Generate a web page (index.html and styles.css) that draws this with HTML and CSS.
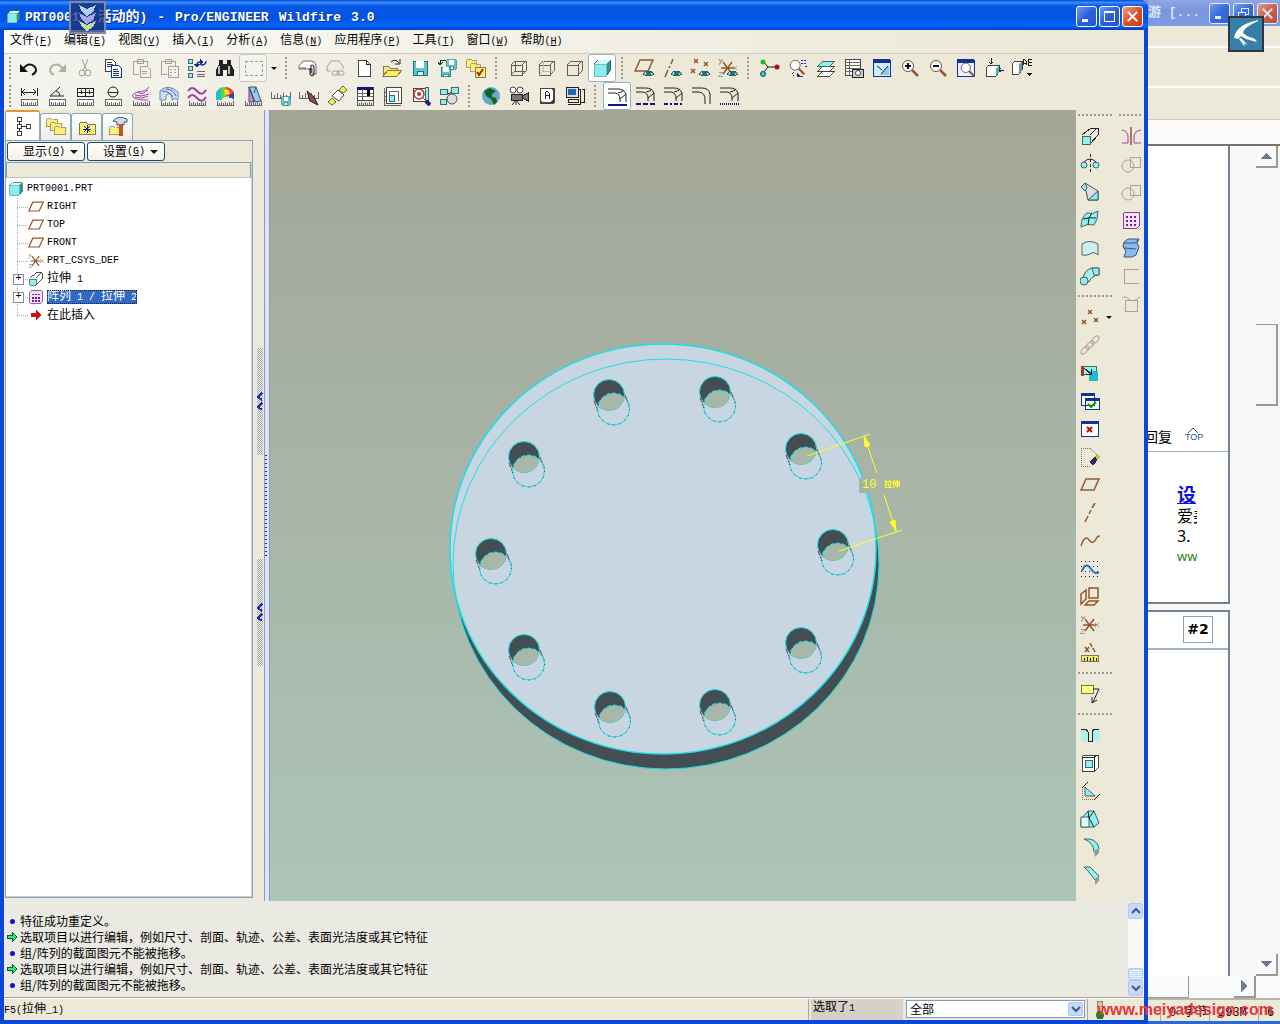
FILE: index.html
```
<!DOCTYPE html>
<html lang="zh-CN">
<head>
  <meta charset="UTF-8">
  <meta name="viewport" content="width=device-width, initial-scale=1.0">
  <title>PRT0001 (活动的) - Pro/ENGINEER Wildfire 3.0</title>
  <link rel="stylesheet" href="styles.css">
</head>
<body>

<!-- shared icon parts -->
<svg class="defs" aria-hidden="true">
  <symbol id="ruler" viewBox="0 0 20 20"><path d="M2 13h16v6H2z" fill="#fff" stroke="#666"/><path class="t" d="M4 19v-3M6 19v-2M8 19v-3M10 19v-2M12 19v-3M14 19v-2M16 19v-3"/></symbol>
  <symbol id="ticks" viewBox="0 0 20 20"><path class="t" d="M2 15v4h16v-4M4 19v-2M6 19v-3M8 19v-2M10 19v-3M12 19v-2M14 19v-3M16 19v-2"/></symbol>
  <symbol id="plane" viewBox="0 0 20 20"><path class="br" d="M6 4h13l-5 11H1z"/></symbol>
  <symbol id="eye" viewBox="0 0 20 20"><path d="M9 16q5-6 11 0q-5 4-11 0z" fill="#bdd" stroke="#355"/><circle cx="14.500" cy="15.500" r="2.500" fill="#177"/></symbol>
  <symbol id="csys" viewBox="0 0 20 20"><path class="br" d="M5 4l9 12M14 4L5 16M3 10h13"/><path class="g" d="M1 1l2 3 2-3M3 4l-2 3M1 14h4l-4 4h4M15 8l4 4M19 8l-4 4"/></symbol>
  <symbol id="cube" viewBox="0 0 20 20"><path d="M2 6l4-4h12v11l-4 5H2z" fill="#299" stroke="#466"/><path d="M2 6h12v12H2z" fill="#8ee"/><path d="M2 6l4-4h12l-4 4z" fill="#cff"/><path d="M2 6h12v12H2z" fill="none" stroke="#7bb"/></symbol>
  <symbol id="floppy" viewBox="0 0 20 20"><path d="M3 3h14v14H3z" fill="#5cc" stroke="#367"/><path d="M6 3h8v7H6z" fill="#fff"/><path d="M7 13h6v4H7z" fill="#dff" stroke="#367"/></symbol>
  <symbol id="folder" viewBox="0 0 20 20"><path d="M2 7l2-2h5l2 2h7v10H2z" fill="#fe7" stroke="#875"/></symbol>
  <symbol id="extrude" viewBox="0 0 20 20"><path class="c" d="M2 10h8v8H2z"/><path class="k" d="M2 9l9-7h7v7l-7 8M10 9l7-7"/></symbol>
  <symbol id="boolean" viewBox="0 0 20 20"><path class="g" d="M9 3h10v10H9z"/><circle class="g" cx="7" cy="12" r="6"/></symbol>
  <symbol id="pattern" viewBox="0 0 20 20"><path d="M2 4l2-2h14v14l-2 2H2z" fill="#fdf" stroke="#748"/><path class="dots" d="M5 7h11M5 11h11M5 15h11"/></symbol>
  <symbol id="box" viewBox="0 0 20 20"><path d="M3 7h11v10H3zM3 7l4-4h11v10l-4 4M14 7l4-4"/></symbol>
  <symbol id="lens" viewBox="0 0 20 20"><path class="soft" d="M12 12l6 6" stroke="#953" stroke-width="2.500"/><circle cx="8" cy="8" r="5.500" fill="#fff" stroke="#555"/></symbol>
  <symbol id="edge" viewBox="0 0 20 20"><path class="k soft" d="M1 4h10q6 0 8 5v8M1 8h7q5 1 5 6v3M11 8q5-1 6-3M13 14l6-5"/></symbol>
  <symbol id="go" viewBox="0 0 12 12"><path d="M1 4h5V1l5 5-5 5V8H1z"/></symbol>
  <symbol id="up" viewBox="0 0 12 12"><path class="soft" d="M2 8l4-4 4 4" fill="none" stroke="#3d5a8a" stroke-width="2"/></symbol>
  <symbol id="down" viewBox="0 0 12 12"><path class="soft" d="M2 4l4 4 4-4" fill="none" stroke="#3d5a8a" stroke-width="2"/></symbol>
  <symbol id="min" viewBox="0 0 20 20"><path d="M5 13h7v3H5z" fill="#fff"/></symbol>
  <symbol id="close" viewBox="0 0 20 20"><path class="soft" d="M5 5l10 10M15 5L5 15" stroke="#fff" stroke-width="2"/></symbol>
</svg>

<div class="app">
  <header class="titlebar">
    <svg class="title-icon"><use href="#cube"/></svg>
    <h1 class="title"><span>PRT0001</span><span>(<b class="zh">活动的</b>)</span><span>-</span><span>Pro/ENGINEER</span><span>Wildfire</span><span>3.0</span></h1>
    <div class="win-buttons">
      <button class="win-btn" aria-label="最小化"><svg viewBox="0 0 20 20"><use href="#min"/></svg></button>
      <button class="win-btn" aria-label="最大化"><svg viewBox="0 0 20 20"><path d="M5 5h10v10H5zM5 6h10" fill="none" stroke="#fff" stroke-width="1.500"/></svg></button>
      <button class="win-btn win-close" aria-label="关闭"><svg viewBox="0 0 20 20"><use href="#close"/></svg></button>
    </div>
    <div class="badge badge-down">
      <svg viewBox="0 0 33 29"><path d="M8 2l8 4 9-4-3 7-6 4-5-4z" fill="#b4cdf4"/><path d="M8 10l8 4 9-4-3 7-6 4-5-4z" fill="#a9a6ea"/><path d="M8 18l8 4 9-4-3 6-6 4-5-4z" fill="#c4dc9c"/></svg>
    </div>
  </header>

  <nav class="menubar">
    <a href="#">文件<span class="lat">(<u>F</u>)</span></a>
    <a href="#">编辑<span class="lat">(<u>E</u>)</span></a>
    <a href="#">视图<span class="lat">(<u>V</u>)</span></a>
    <a href="#">插入<span class="lat">(<u>I</u>)</span></a>
    <a href="#">分析<span class="lat">(<u>A</u>)</span></a>
    <a href="#">信息<span class="lat">(<u>N</u>)</span></a>
    <a href="#">应用程序<span class="lat">(<u>P</u>)</span></a>
    <a href="#">工具<span class="lat">(<u>T</u>)</span></a>
    <a href="#">窗口<span class="lat">(<u>W</u>)</span></a>
    <a href="#">帮助<span class="lat">(<u>H</u>)</span></a>
  </nav>

  <div class="toolbars">
    <div class="toolbar">
      <i class="grip"></i>
      <button class="tool" aria-label="撤消"><svg viewBox="0 0 20 20" class="soft"><path d="M4 11q5-7 11-3q5 5-2 9" fill="none" stroke="#111" stroke-width="2"/><path d="M1 6v8h8z" fill="#111"/></svg></button>
      <button class="tool" aria-label="重做"><svg viewBox="0 0 20 20" class="soft"><path d="M16 11q-5-7-11-3q-5 5 2 9" fill="none" stroke="#b0aea2" stroke-width="2"/><path d="M19 6v8h-8z" fill="#b0aea2"/></svg></button>
      <button class="tool" aria-label="剪切"><svg viewBox="0 0 20 20" class="soft"><path class="g" d="M7 1l5 12M13 1L8 13"/><circle class="g" cx="7" cy="15" r="3"/><circle class="g" cx="13" cy="15" r="3"/></svg></button>
      <button class="tool" aria-label="复制"><svg viewBox="0 0 20 20"><path d="M2 1h7l3 3v9H2z" class="w"/><path d="M4 4h5M4 6h6M4 8h6" stroke="#245"/><path d="M8 7h7l3 3v9H8z" fill="#fff" stroke="#139"/><path d="M10 11h5M10 13h6M10 15h6M10 17h6" stroke="#139"/></svg></button>
      <button class="tool" aria-label="粘贴"><svg viewBox="0 0 20 20"><path class="g" d="M2 3h14v5M2 3v13h6M6 3V1h6v4H6zM9 8h7l3 3v8H9zM11 13h5M11 15h5"/></svg></button>
      <button class="tool" aria-label="选择性粘贴"><svg viewBox="0 0 20 20"><path class="g" d="M2 3h14v5M2 3v13h6M6 3V1h6v4H6zM9 8h10v11H9zM11 11h2M15 11h2M11 14h2M15 14h2M11 17h2"/></svg></button>
      <button class="tool" aria-label="再生"><svg viewBox="0 0 20 20"><path class="c" d="M1 1h4v4H1zM1 8h4v4H1zM1 15h4v4H1z"/><path class="soft" d="M10 8q-1-4 4-4M19 3q0 4-5 4" fill="none" stroke="#139" stroke-width="1.500"/><path d="M13 1l4 3-4 3zM7 6h6l-3 4z" fill="#139"/><path class="t" d="M10 13h8M10 16h8M10 18h8"/></svg></button>
      <button class="tool" aria-label="查找"><svg viewBox="0 0 20 20"><path d="M4 2h4v4h4V2h4v4l3 6v6h-7v-6H8v6H1v-6l3-6z" fill="#222"/><path d="M4 8v8M14 8v8" stroke="#bbb" stroke-width="2"/></svg></button>
      <button class="tool framed" aria-label="选取"><svg viewBox="0 0 20 20"><path d="M2 3h17v14H2z" fill="none" stroke="#999" stroke-dasharray="3 2"/></svg></button>
      <button class="drop" aria-label="更多"><i class="caret"></i></button>
      <i class="grip wide"></i>
      <button class="tool" aria-label="附件"><svg viewBox="0 0 20 20" class="soft"><path d="M1 8l4-5h8q4 0 5 4v9h-4v-5H1z" fill="#fff" stroke="#666"/><path d="M2 10h6" stroke="#c33"/><path d="M12 10v5q0 3 2 3t2-3V9q0-2-2-2t-1 2v6" fill="none" stroke="#111"/></svg></button>
      <button class="tool" aria-label="链接"><svg viewBox="0 0 20 20" class="soft"><path class="g" d="M1 9l4-6h8l4 5v3M1 9v4h4"/><rect class="g" x="6" y="13" width="7" height="4" rx="2"/><rect class="g" x="11" y="13" width="7" height="4" rx="2"/></svg></button>
      <button class="tool" aria-label="新建"><svg viewBox="0 0 20 20"><path class="w" d="M4 2h8l4 4v12H4z"/><path class="k" d="M12 2v4h4"/></svg></button>
      <button class="tool" aria-label="打开"><svg viewBox="0 0 20 20"><path d="M1 17V8h5l2 2h7v2" fill="#ee8" stroke="#875"/><path d="M1 18l5-6h14l-5 6z" fill="#fe5" stroke="#875"/><path class="k soft" d="M9 4q4-4 8 1M18 1v5h-5"/></svg></button>
      <button class="tool" aria-label="保存"><svg viewBox="0 0 20 20"><use href="#floppy"/></svg></button>
      <button class="tool" aria-label="保存副本"><svg viewBox="0 0 20 20"><use href="#floppy" x="7" y="0" width="13" height="13"/><use href="#floppy" x="1" y="7" width="14" height="14"/><path class="k" d="M8 2H2v5M0 4l2 3 3-3"/></svg></button>
      <button class="tool" aria-label="工作目录"><svg viewBox="0 0 20 20"><use href="#folder" x="-1" y="-2" width="13" height="13"/><use href="#folder" x="3" y="2" width="13" height="13"/><path d="M9 9h10v10H9z" fill="#fe7" stroke="#875"/><path class="soft" d="M11 14l2 3 4-6" fill="none" stroke="#a20" stroke-width="2"/></svg></button>
      <i class="grip wide"></i>
      <button class="tool" aria-label="线框"><svg viewBox="0 0 20 20" class="ln"><use href="#box"/><path d="M7 3v10h11M3 17l4-4"/></svg></button>
      <button class="tool" aria-label="隐藏线"><svg viewBox="0 0 20 20" class="ln"><use href="#box"/><path d="M7 3v10h11M3 17l4-4" stroke="#bba"/></svg></button>
      <button class="tool" aria-label="无隐藏线"><svg viewBox="0 0 20 20" class="ln"><use href="#box"/></svg></button>
      <button class="tool on" aria-label="着色"><svg viewBox="0 0 20 20"><use href="#cube"/></svg></button>
      <i class="grip wide"></i>
      <button class="tool" aria-label="基准平面"><svg viewBox="0 0 20 20"><use href="#plane" y="-2"/><use href="#eye"/></svg></button>
      <button class="tool" aria-label="基准轴"><svg viewBox="0 0 20 20"><path class="br" d="M11 1L9 6M8 8l-1 2M6 12l-3 7"/><use href="#eye"/></svg></button>
      <button class="tool" aria-label="基准点"><svg viewBox="0 0 20 20"><path class="br" d="M4 1l4 4M8 1L4 5M14 4l4 4M18 4l-4 4M1 11l4 4M5 11l-4 4"/><use href="#eye"/></svg></button>
      <button class="tool" aria-label="坐标系"><svg viewBox="0 0 20 20"><use href="#csys"/><use href="#eye"/></svg></button>
      <i class="grip wide"></i>
      <button class="tool" aria-label="旋转中心"><svg viewBox="0 0 20 20" class="soft"><path class="k" d="M3 3l5 6h8M8 9l-5 6"/><circle cx="3" cy="4" r="2.500" fill="#2b2"/><circle cx="17" cy="9" r="2.500" fill="#a11"/><circle cx="3" cy="16" r="2.500" fill="#3cd" stroke="#245"/></svg></button>
      <button class="tool" aria-label="定向"><svg viewBox="0 0 20 20"><use href="#lens" width="18" height="18"/><path d="M13 2h5M13 5h5M17 8h2M6 14q-3 3 1 5M10 18h5" stroke="#139" fill="none" stroke-dasharray="2 1"/><path d="M9 15l4 4H9z" fill="#139"/></svg></button>
      <button class="tool" aria-label="层"><svg viewBox="0 0 20 20"><path class="w" d="M2 18l5-5h12l-5 5z"/><path class="w" d="M2 13l5-5h12l-5 5z"/><path class="c" d="M2 8l5-5h12l-5 5z"/></svg></button>
      <button class="tool" aria-label="视图管理器"><svg viewBox="0 0 20 20"><path class="w" d="M1 1h15v16H1z"/><path class="t" d="M1 4h15M1 7h15M1 10h15M1 13h15M5 1v16"/><path d="M8 11h11v8H8z" fill="#ccc" stroke="#222"/><circle class="w" cx="14" cy="15" r="2.500"/></svg></button>
      <button class="tool" aria-label="重画"><svg viewBox="0 0 20 20"><path d="M1 2h17v16H1z" fill="#cef" stroke="#139"/><path d="M1 1h17v4H1z" fill="#139"/><path d="M17 7v10H8z" fill="#8ce"/><path class="k soft" d="M16 8l-7 8M5 8l5 4"/></svg></button>
      <button class="tool" aria-label="放大"><svg viewBox="0 0 20 20"><use href="#lens"/><path d="M5 8h6M8 5v6" stroke="#111" stroke-width="2"/></svg></button>
      <button class="tool" aria-label="缩小"><svg viewBox="0 0 20 20"><use href="#lens"/><path d="M5 8h6" stroke="#111" stroke-width="2"/></svg></button>
      <button class="tool" aria-label="重新调整"><svg viewBox="0 0 20 20"><path d="M1 2h17v16H1z" fill="#eef" stroke="#139"/><path d="M1 1h17v4H1z" fill="#139"/><use href="#lens" x="3" y="3" width="17" height="17"/></svg></button>
      <button class="tool" aria-label="重定向"><svg viewBox="0 0 20 20"><path class="w" d="M2 10l3-3h10v7l-3 4H2z"/><path d="M12 10l3-3v7l-3 4z" fill="#3bb"/><path class="k" d="M7 0v6M5 4l2 2 2-2M20 12h-5M17 10l-2 2 2 2"/></svg></button>
      <button class="tool" aria-label="已命名视图"><svg viewBox="0 0 20 20"><path class="w" d="M0 6l3-3h7v9l-3 4H0z"/><path d="M7 6l3-3v9l-3 4z" fill="#699"/><path class="k" d="M11 7V3l1-2 2 2v4M11 5h3M16 1v6h4V1zM16 4h4"/><path d="M14 15h6l-3 3z" fill="#111"/></svg></button>
    </div>

    <div class="toolbar">
      <i class="grip"></i>
      <button class="tool" aria-label="距离"><svg viewBox="0 0 20 20"><use href="#ruler"/><path class="k" d="M2 2v8M18 2v8M3 6h14M6 3L3 6l3 3M14 3l3 3-3 3"/></svg></button>
      <button class="tool" aria-label="角度"><svg viewBox="0 0 20 20"><use href="#ruler"/><path class="k soft" d="M13 1L3 10h14M9 5q4 1 4 5"/></svg></button>
      <button class="tool" aria-label="区域"><svg viewBox="0 0 20 20"><use href="#ruler"/><path class="k" d="M2 2h16v8H2zM10 2v8M2 6h16M6 4v4M14 4v4"/></svg></button>
      <button class="tool" aria-label="直径"><svg viewBox="0 0 20 20"><use href="#ruler"/><circle class="k" cx="10" cy="6" r="5"/><path class="k" d="M5 6h10"/></svg></button>
      <button class="tool" aria-label="曲率"><svg viewBox="0 0 20 20"><use href="#ticks"/><path class="pu" d="M18 1q-4 5-11 5q-7 2-5 5q2 3 15 3M7 6l4 2 6-4M4 9l6 1 8-2M4 11l7 1 6-2"/></svg></button>
      <button class="tool" aria-label="曲面分析"><svg viewBox="0 0 20 20"><use href="#ticks"/><g class="soft"><path d="M1 14V5q8-8 18 1v8q-3-3-6 0V9q-3-3-6 1v4z" fill="#cdf" stroke="#68a"/><path d="M3 5q8 0 10 6M7 3q7 0 10 7" fill="none" stroke="#469"/></g></svg></button>
      <button class="tool" aria-label="偏移"><svg viewBox="0 0 20 20"><use href="#ticks"/><path class="pu" d="M1 5q4-6 9 0t9-1M1 12q4-6 9 0t9-1" stroke-width="2"/></svg></button>
      <button class="tool" aria-label="着色曲率"><svg viewBox="0 0 20 20"><use href="#ticks"/><g class="soft"><path d="M1 14V6q3-4 6-5v13z" fill="#2bd"/><path d="M6 14V2q4-2 7 0v9q-4-1-7 3z" fill="#5d3"/><path d="M11 10V1q4 0 8 5v5z" fill="#e43"/><path d="M9 4q5-2 6 4l-5 1z" fill="#fd2"/><path d="M14 9l5-2v7q-2-3-5-2z" fill="#24c"/></g></svg></button>
      <button class="tool" aria-label="拔模"><svg viewBox="0 0 20 20"><use href="#ticks"/><g class="soft"><path d="M6 1h7l5 14-6 1z" fill="#9ce" stroke="#456"/><path d="M6 1v15h5z" fill="#d8c" stroke="#456"/><path d="M6 1l6 15M13 1l-2 6" stroke="#456"/></g></svg></button>
      <button class="tool" aria-label="保存分析"><svg viewBox="0 0 20 20"><path class="t" d="M0 6v6h19V6M3 12V9M6 12V7M9 12V9M12 12V7M15 12V9"/><use href="#floppy" x="9" y="9" width="12" height="12"/></svg></button>
      <button class="tool" aria-label="隐藏分析"><svg viewBox="0 0 20 20"><path class="t" d="M0 6v6h19V6M3 12V9M6 12V7M9 12V9M12 12V7M15 12V9"/><path class="soft" d="M8 5l7 6 4 8-8-4z" fill="#755" stroke="#411"/></svg></button>
      <button class="tool" aria-label="注释"><svg viewBox="0 0 20 20" class="soft"><path class="w" d="M5 10l6-6 6 5-5 6z"/><path d="M12 4l4-4 4 4-4 3zM1 16l4-4 4 4-4 3z" fill="#ee5" stroke="#664"/></svg></button>
      <button class="tool" aria-label="参数表"><svg viewBox="0 0 20 20"><path class="w" d="M2 1h16v13H2z"/><path d="M2 1h16v3H2z" fill="#118"/><path class="t" d="M2 7h16M2 10h16M7 3v11"/><path d="M12 4h3v6h-3z"/><use href="#ticks"/></svg></button>
      <button class="tool" aria-label="图框"><svg viewBox="0 0 20 20"><path class="w" d="M3 1h15v16H3z"/><path class="t" d="M6 5h9v10M6 5v10"/><path class="c" d="M6 9h5v6H6z"/><path class="t" d="M1 2v17h17M1 6h2M1 10h2M1 14h2"/></svg></button>
      <button class="tool" aria-label="模型检查"><svg viewBox="0 0 20 20"><path class="w" d="M2 2h14v13H2z"/><path class="c" d="M14 1h3v13h-3z"/><circle cx="8" cy="8" r="5" fill="none" stroke="#b33" stroke-width="1.500"/><circle cx="8" cy="8" r="2" fill="#b33"/><path class="soft" d="M11 11l4 4" stroke="#b33"/><path class="soft" d="M15 15l4 4" stroke="#228" stroke-width="4"/></svg></button>
      <button class="tool" aria-label="机构"><svg viewBox="0 0 20 20"><path class="c" d="M1 3h7v5H1zM12 1h7v6h-7zM1 13h6v5H1z"/><path class="k soft" d="M8 6l4 4M12 6l-4 6"/><circle cx="13" cy="13" r="5" fill="#ddd" stroke="#555"/></svg></button>
      <i class="grip wide"></i>
      <button class="tool" aria-label="网络"><svg viewBox="0 0 20 20" class="soft"><circle cx="10" cy="10" r="9" fill="#68a8d0"/><path d="M3 5l6-3 6 3-4 3v3l4 1 1 4-3 3-3-6-5-3z" fill="#162"/></svg></button>
      <button class="tool" aria-label="动画"><svg viewBox="0 0 20 20"><circle cx="4" cy="4" r="3" class="w"/><circle cx="11" cy="4" r="3" class="w"/><path d="M2 8h11v6H2zM13 10l6-3v8l-6-3z" fill="#777" stroke="#222"/><path class="k soft" d="M7 14l-4 5M7 14l4 5M7 14v5"/></svg></button>
      <button class="tool" aria-label="注释键"><svg viewBox="0 0 20 20"><rect x="3" y="2" width="15" height="16" rx="2" fill="#444"/><rect x="3" y="2" width="13" height="14" rx="2" class="w"/><path class="k" d="M8 13V7l2-2 2 2v6M8 9h4"/></svg></button>
      <button class="tool" aria-label="工作站"><svg viewBox="0 0 20 20"><path d="M1 1h12v10H1z" fill="#ddd" stroke="#222"/><path d="M3 3h8v6H3z" fill="#26b"/><path class="k" d="M3 13h10v3H3zM13 3h2v15h-3M17 3h2v13h-3M3 18h9"/></svg></button>
      <i class="grip wide"></i>
      <button class="tool on" aria-label="相切实线"><svg viewBox="0 0 20 20"><use href="#edge" y="-1"/><path class="nv" d="M1 19h19"/></svg></button>
      <button class="tool" aria-label="相切虚线"><svg viewBox="0 0 20 20"><use href="#edge" y="-2"/><path class="nv" d="M1 18h19" stroke-dasharray="5 2"/></svg></button>
      <button class="tool" aria-label="中心线"><svg viewBox="0 0 20 20"><use href="#edge" y="-2"/><path class="nv" d="M1 18h19" stroke-dasharray="4 2 2 2"/></svg></button>
      <button class="tool" aria-label="不显示相切"><svg viewBox="0 0 20 20"><path class="k soft" d="M1 2h10q7 0 8 6v10M1 6h7q6 1 6 7v5"/></svg></button>
      <button class="tool" aria-label="灰色相切"><svg viewBox="0 0 20 20"><use href="#edge" y="-2"/><path class="nv" d="M1 18h19" stroke-dasharray="1 1"/></svg></button>
    </div>
  </div>

  <main class="workspace">
    <aside class="navigator">
      <div class="tabs">
        <button class="tab active" aria-label="模型树"><svg viewBox="0 0 20 20"><path class="w" d="M4 1h4v4H4zM4 8h4v4H4zM4 15h4v4H4zM13 8h4v4h-4z"/><path class="k" d="M6 5v3M6 12v3M8 10h5"/></svg></button>
        <button class="tab" aria-label="文件夹"><svg viewBox="0 0 20 20"><use href="#folder" x="-1" y="-2" width="14" height="14"/><use href="#folder" x="3" y="2" width="14" height="14"/><use href="#folder" x="7" y="6" width="14" height="14"/></svg></button>
        <button class="tab" aria-label="收藏夹"><svg viewBox="0 0 20 20"><use href="#folder"/><path d="M10 8v8M6 12h8M7 9l6 6M13 9l-6 6" stroke="#129"/></svg></button>
        <button class="tab" aria-label="连接"><svg viewBox="0 0 20 20"><use href="#folder" y="6" width="14" height="14"/><path class="soft" d="M5 4q5-6 14-2v3h-3v3H9V5z" fill="#cde" stroke="#457"/><path d="M11 7h4v12h-4z" fill="#b52"/></svg></button>
      </div>
      <div class="nav-panel">
        <div class="nav-actions">
          <button class="nav-btn">显示<span class="lat">(<u>O</u>)</span><i class="caret"></i></button>
          <button class="nav-btn">设置<span class="lat">(<u>G</u>)</span><i class="caret"></i></button>
        </div>
        <div class="tree-head"></div>
        <ul class="tree">
          <li class="root"><svg viewBox="0 0 20 20"><use href="#cube"/></svg><span class="lat">PRT0001.PRT</span></li>
          <li><svg viewBox="0 0 20 20"><use href="#plane"/></svg><span class="lat">RIGHT</span></li>
          <li><svg viewBox="0 0 20 20"><use href="#plane"/></svg><span class="lat">TOP</span></li>
          <li><svg viewBox="0 0 20 20"><use href="#plane"/></svg><span class="lat">FRONT</span></li>
          <li><svg viewBox="0 0 20 20"><use href="#csys"/></svg><span class="lat">PRT_CSYS_DEF</span></li>
          <li class="closed"><svg viewBox="0 0 20 20"><use href="#extrude"/></svg><span>拉伸<span class="lat"> 1</span></span></li>
          <li class="closed"><svg viewBox="0 0 20 20"><use href="#pattern"/></svg><span class="selected">阵列<span class="lat"> 1 / </span>拉伸<span class="lat"> 2</span></span></li>
          <li class="last"><svg viewBox="0 0 12 12" fill="#c11"><use href="#go"/></svg><span>在此插入</span></li>
        </ul>
      </div>
    </aside>

    <div class="splitter">
      <div class="collapse">
        <div class="ridge"><svg viewBox="0 0 6 18"><path d="M5 1L1 5l4 3M5 11l-4 4 4 3"/></svg></div>
        <div class="ridge"><svg viewBox="0 0 6 18"><path d="M5 1L1 5l4 3M5 11l-4 4 4 3"/></svg></div>
      </div>
      <div class="sash"><i></i></div>
    </div>

    <section class="viewport">
      <svg class="model" viewBox="270 110 806 791">
        <defs>
          <clipPath id="bore"><circle r="15.500"/></clipPath>
          <clipPath id="face"><ellipse cx="663" cy="549" rx="213" ry="205"/></clipPath>
          <g id="hole">
            <circle r="15.500" fill="#434d52" stroke="#18dfe8"/>
            <circle cx="4.500" cy="14" r="16" fill="#a9b7a8" clip-path="url(#bore)"/>
            <path d="M-15 6l4 10M16 0l4 10" stroke="#b0244c" stroke-dasharray="5 1"/>
            <circle cx="4.500" cy="14" r="16" fill="none" stroke="#18dfe8"/>
            <circle cx="4.500" cy="14" r="16" fill="none" stroke="#234" stroke-dasharray="1 5"/>
          </g>
        </defs>
        <ellipse cx="666" cy="564" rx="213" ry="205" fill="#434d52" stroke="#18dfe8"/>
        <ellipse cx="663" cy="549" rx="213" ry="205" fill="#c8d6e2" stroke="#18dfe8" stroke-width="1.500"/>
        <ellipse cx="666" cy="564" rx="213" ry="205" fill="none" stroke="#18dfe8" clip-path="url(#face)"/>
        <use href="#hole" x="609" y="395"/>
        <use href="#hole" x="715" y="392"/>
        <use href="#hole" x="801" y="449"/>
        <use href="#hole" x="833" y="545"/>
        <use href="#hole" x="801" y="643"/>
        <use href="#hole" x="715" y="705"/>
        <use href="#hole" x="610" y="707"/>
        <use href="#hole" x="524" y="650"/>
        <use href="#hole" x="491" y="554"/>
        <use href="#hole" x="524" y="457"/>
        <path d="M859 478h11v15h-11z" fill="#a4b2a8"/>
        <g class="dim">
          <path d="M807 456l63-22M839 551l63-21M864 436l13 37M884 495l12 36"/>
          <path class="head" d="M864 436l6 9-5 2zM896 531l-1-11-5 2z"/>
          <text x="862" y="488" class="dim-num">10</text>
          <text x="884" y="487" class="dim-text">拉伸</text>
        </g>
      </svg>
    </section>

    <aside class="features">
      <div class="feature-col">
        <i class="rule"></i>
        <button class="tool" aria-label="拉伸"><svg viewBox="0 0 20 20"><use href="#extrude"/></svg></button>
        <button class="tool" aria-label="旋转"><svg viewBox="0 0 20 20"><circle class="c" cx="4" cy="11" r="3"/><circle class="c" cx="16" cy="11" r="3"/><path class="k" d="M10 0v20" stroke-dasharray="3 2"/><path class="k soft" d="M4 8q6-6 12 0"/></svg></button>
        <button class="tool" aria-label="扫描混合"><svg viewBox="0 0 20 20" class="soft"><path d="M1 5l4-4 13 8v9H8L6 9z" fill="#ddd" stroke="#455"/><path d="M1 5l4-4 2 5-2 3zM8 18l10-9v9z" fill="#8ee" stroke="#455"/></svg></button>
        <button class="tool" aria-label="边界混合"><svg viewBox="0 0 20 20" class="soft"><path class="c" d="M1 17q0-10 6-14q6 2 11-2q0 9-4 14q-7-2-13 2z"/><path class="k" d="M3 9q6-2 13-1M12 3q-4 4-4 12"/></svg></button>
        <button class="tool" aria-label="填充"><svg viewBox="0 0 20 20" class="soft"><path d="M2 6q8-5 16 0v11q-4-4-8-1q-4 2-8 1z" fill="#cee" stroke="#566"/></svg></button>
        <button class="tool" aria-label="可变剖面扫描"><svg viewBox="0 0 20 20" class="soft"><path d="M3 13q1-9 9-11h7v7q-7 0-10 7z" fill="#aee" stroke="#455"/><path class="c" d="M12 2h7v7h-5z"/><circle class="c" cx="4" cy="15" r="4"/></svg></button>
        <i class="rule"></i>
        <button class="tool with-drop" aria-label="基准点工具"><svg viewBox="0 0 20 20"><path class="br" d="M8 3l4 4M12 3L8 7M2 13l4 4M6 13l-4 4M14 11l4 4M18 11l-4 4"/></svg><i class="caret"></i></button>
        <button class="tool" aria-label="链"><svg viewBox="0 0 20 20"><ellipse class="g" cx="5" cy="15" rx="5" ry="2.500" transform="rotate(-45 5 15)"/><ellipse class="g" cx="10" cy="10" rx="5" ry="2.500" transform="rotate(-45 10 10)"/><ellipse class="g" cx="15" cy="5" rx="5" ry="2.500" transform="rotate(-45 15 5)"/></svg></button>
        <button class="tool" aria-label="复制几何"><svg viewBox="0 0 20 20"><path class="c" d="M2 3h14v8H2z"/><path d="M9 8h9v10H9z" fill="#2bc"/><path d="M1 3h3v10H1z" fill="#a33"/><path class="k" d="M4 5l7 6M11 6v5H6"/></svg></button>
        <button class="tool" aria-label="确认"><svg viewBox="0 0 20 20"><path d="M1 2h13v12H1zM5 7h14v11H5z" fill="#fff" stroke="#139"/><path d="M1 2h13v3H1zM5 7h14v3H5z" fill="#139"/><path class="soft" d="M8 13l3 3 5-5" fill="none" stroke="#190" stroke-width="2"/></svg></button>
        <button class="tool" aria-label="取消"><svg viewBox="0 0 20 20"><path d="M1 2h17v15H1z" fill="#fff" stroke="#139"/><path d="M1 2h17v3H1z" fill="#139"/><path class="soft" d="M7 8l5 5M12 8l-5 5" stroke="#a11" stroke-width="2"/></svg></button>
        <button class="tool" aria-label="擦除"><svg viewBox="0 0 20 20"><path d="M1 1h9l7 7v3M1 1v18h9" fill="none" stroke="#778" stroke-dasharray="1 1"/><path class="g" d="M10 1l6 6"/><path d="M10 15l6-7 3 3-6 8z" fill="#325"/><path d="M15 9l3-2 2 3-3 3z" fill="#bc3"/></svg></button>
        <button class="tool" aria-label="平面"><svg viewBox="0 0 20 20"><use href="#plane"/></svg></button>
        <button class="tool" aria-label="轴"><svg viewBox="0 0 20 20"><path class="br" d="M15 0l-3 5M11 7l-2 4M8 13l-3 6"/></svg></button>
        <button class="tool" aria-label="曲线"><svg viewBox="0 0 20 20"><path class="br" d="M1 15q4-12 8-6q4 5 7-1q1-3 4-3"/></svg></button>
        <button class="tool" aria-label="草绘"><svg viewBox="0 0 20 20"><path d="M1 2h18M1 7h18M1 12h18M1 17h18" stroke="#223" stroke-dasharray="1 3"/><path class="soft" d="M2 12q4-10 9-2q4 6 8 3" fill="none" stroke="#17c" stroke-width="2"/></svg></button>
        <button class="tool" aria-label="参照"><svg viewBox="0 0 20 20"><path class="br" d="M9 1h9v10H9zM1 7l5-4v9l-5 5zM5 18l4-4h9l-4 4z"/></svg></button>
        <button class="tool" aria-label="坐标系工具"><svg viewBox="0 0 20 20"><use href="#csys"/></svg></button>
        <button class="tool" aria-label="分析特征"><svg viewBox="0 0 20 20"><path class="br" d="M5 4l4 5M9 4L5 9M10 0l2 4M13 5l2 4"/><path d="M1 12h17v6H1z" fill="#ee6" stroke="#874"/><path class="k" d="M4 15v3M7 14v4M10 15v3M13 14v4M16 15v3"/></svg></button>
        <i class="rule"></i>
        <button class="tool" aria-label="注释特征"><svg viewBox="0 0 20 20"><path d="M1 1h12v8H1z" fill="#ff8" stroke="#773"/><path class="k soft" d="M13 5h6l-6 13M12 13v6l5-3"/></svg></button>
        <i class="rule"></i>
        <button class="tool" aria-label="孔"><svg viewBox="0 0 20 20"><path d="M1 4h5l2 3v9h5V7l2-3h5v12H1z" fill="#aef0ee"/><path class="k" d="M1 4h5l2 3v9h4V7l2-3h5"/></svg></button>
        <button class="tool" aria-label="壳"><svg viewBox="0 0 20 20"><path class="w" d="M2 4l2-2h14v13l-3 3H2z"/><path class="k" d="M2 4h12v14M14 4l4-2"/><path class="c" d="M5 7h7v7H5z"/></svg></button>
        <button class="tool" aria-label="筋"><svg viewBox="0 0 20 20"><path class="c soft" d="M5 6v9h10z"/><path class="k soft" d="M2 7l6-6M14 19l6-6"/><path d="M2 8v10h12" fill="none" stroke="#c44" stroke-dasharray="1 1"/></svg></button>
        <button class="tool" aria-label="拔模特征"><svg viewBox="0 0 20 20" class="soft"><path class="c" d="M1 10l7-8h6l5 12-5 4H1z"/><path d="M1 8h8v10H1z" fill="#dff" stroke="#466"/><path class="k" d="M9 9l5 9M8 2l1 7 5-7"/></svg></button>
        <button class="tool" aria-label="倒圆角"><svg viewBox="0 0 20 20" class="soft"><path class="c" d="M4 2h6q8 2 9 10l-5 3q0-9-10-13z"/><path d="M14 14l5-3v5l-4 4z" fill="#999"/></svg></button>
        <button class="tool" aria-label="倒角"><svg viewBox="0 0 20 20" class="soft"><path class="c" d="M4 2h6l9 9-4 4L8 6z"/><path d="M15 14l4-3v5l-4 4z" fill="#999"/></svg></button>
      </div>
      <div class="feature-col">
        <i class="rule"></i>
        <button class="tool" aria-label="镜像"><svg viewBox="0 0 20 20"><path class="pu" d="M1 4q6 1 6 7v6H1M20 4q-7 1-7 7v6h7"/><path class="br" d="M10 1v18"/></svg></button>
        <button class="tool" aria-label="合并"><svg viewBox="0 0 20 20"><use href="#boolean"/></svg></button>
        <button class="tool" aria-label="修剪"><svg viewBox="0 0 20 20"><use href="#boolean"/></svg></button>
        <button class="tool" aria-label="阵列"><svg viewBox="0 0 20 20"><use href="#pattern"/></svg></button>
        <button class="tool" aria-label="加厚"><svg viewBox="0 0 20 20" class="soft"><path d="M3 4l4-3h11l-2 4 2 4-3 8-4 2H3l2-6-3-4z" fill="#8be" stroke="#457"/><path d="M3 5h11l3-3M3 10l12 1" fill="none" stroke="#457"/></svg></button>
        <button class="tool" aria-label="延伸"><svg viewBox="0 0 20 20"><path class="g" d="M18 3H3v14h15"/></svg></button>
        <button class="tool" aria-label="偏移曲面"><svg viewBox="0 0 20 20"><path class="g" d="M4 6h12v11H4z"/><path class="g soft" d="M1 4q3-3 8 2q4 2 10-3"/></svg></button>
      </div>
    </aside>
  </main>

  <section class="messages">
    <ul class="log">
      <li><i class="dot"></i>特征成功重定义。</li>
      <li><svg class="go" viewBox="0 0 12 12"><use href="#go"/></svg>选取项目以进行编辑，例如尺寸、剖面、轨迹、公差、表面光洁度或其它特征</li>
      <li><i class="dot"></i>组/阵列的截面图元不能被拖移。</li>
      <li><svg class="go" viewBox="0 0 12 12"><use href="#go"/></svg>选取项目以进行编辑，例如尺寸、剖面、轨迹、公差、表面光洁度或其它特征</li>
      <li><i class="dot"></i>组/阵列的截面图元不能被拖移。</li>
    </ul>
    <div class="scroll">
      <button class="scroll-btn" aria-label="向上"><svg viewBox="0 0 12 12"><use href="#up"/></svg></button>
      <span class="scroll-thumb"></span>
      <button class="scroll-btn" aria-label="向下"><svg viewBox="0 0 12 12"><use href="#down"/></svg></button>
    </div>
  </section>

  <footer class="statusbar">
    <div class="status-text"><span class="lat">F5(</span>拉伸<span class="lat">_1)</span></div>
    <div class="status-sel">选取了<span class="lat">1</span></div>
    <label class="filter" aria-label="过滤器">
      <select><option>全部</option></select>
      <span class="select-btn"><svg viewBox="0 0 12 12"><use href="#down"/></svg></span>
    </label>
    <div class="light"><svg viewBox="0 0 10 20"><path d="M2 1h6v18H2z" fill="#875"/><circle cx="5" cy="4" r="2.500" fill="#dba"/><circle cx="5" cy="9" r="2.500" fill="#dd8"/><circle cx="5" cy="15" r="4" fill="#182"/></svg></div>
  </footer>
</div>

<div class="browser">
  <div class="b-title">
    <span class="b-name">游 [...</span>
    <button class="win-btn" aria-label="最小化"><svg viewBox="0 0 20 20"><use href="#min"/></svg></button>
    <button class="win-btn" aria-label="还原"><svg viewBox="0 0 20 20"><path d="M5 9h7v6H5zM8 9V5h7v6h-3" fill="none" stroke="#fff" stroke-width="1.500"/></svg></button>
    <button class="win-btn win-close" aria-label="关闭"><svg viewBox="0 0 20 20"><use href="#close"/></svg></button>
  </div>
  <div class="badge badge-bird">
    <svg viewBox="0 0 32 32" class="soft"><path d="M28 2C16 5 6 9 4 20l4 1 3-3 5 3 11 3-2-3-8-3-4-3C14 10 20 7 28 3zM9 21l6 8-1-4 4 2-7-7z" fill="#fff"/></svg>
  </div>
  <div class="b-bar b-menu"></div>
  <div class="b-bar b-tools"></div>
  <div class="b-bar b-address"></div>
  <div class="b-bar b-tabs"></div>
  <div class="b-body">
    <div class="b-page">
      <article class="post">
        <div class="reply"><span>回复</span><a href="#" class="top"><svg viewBox="0 0 16 7"><path class="soft" d="M3 7l5-5 5 5" fill="none" stroke="#258"/></svg>TOP</a></div>
        <div class="ad">
          <a href="#">设</a>
          <p>爱美</p>
          <p class="num">3.</p>
          <p class="url">ww</p>
        </div>
      </article>
      <article class="post next">
        <div class="floor"><span>#2</span></div>
      </article>
    </div>
    <div class="b-scroll">
      <button class="b-arrow" aria-label="向上滚动"><svg viewBox="0 0 12 12"><path d="M0 9l6-6 6 6z" fill="#6b7a8c"/></svg></button>
      <span class="b-thumb"></span>
      <button class="b-arrow" aria-label="向下滚动"><svg viewBox="0 0 12 12"><path d="M0 3l6 6 6-6z" fill="#6b7a8c"/></svg></button>
    </div>
  </div>
  <div class="b-hscroll"><span></span><button class="b-arrow" aria-label="向右滚动"><svg viewBox="0 0 12 12"><path d="M3 0l6 6-6 6z" fill="#6b7a8c"/></svg></button></div>
  <div class="b-status"><span>0 字节</span><span>293M</span><span>6</span></div>
</div>

<div class="watermark">www.meiyadesign.com</div>
</body>
</html>
```
FILE: styles.css
```
:root {
  --face: #ece9d8;
  --line: #aca899;
  --blue: #0a46d8;
  --field: #7f9db9;
  --zh: "Noto Sans CJK SC", sans-serif;
  --mono: "Liberation Mono", "Noto Sans CJK SC", monospace;
}

* {
  box-sizing: border-box;
  margin: 0;
  padding: 0;
}

body {
  display: flex;
  position: relative;
  height: 100vh;
  overflow: hidden;
  background: #7b9ad9;
  color: #000;
  font: 12px/16px "Liberation Sans", var(--zh);
}

button {
  border: 0;
  background: none;
  font: inherit;
  color: inherit;
}

ul {
  list-style: none;
}

a {
  color: inherit;
  text-decoration: none;
}

svg {
  display: block;
  shape-rendering: crispEdges;
}

.defs {
  position: absolute;
  width: 0;
  height: 0;
}

.lat {
  font-family: var(--mono);
  font-size: 10px;
  white-space: pre;
}

/* icon strokes */
.k { fill: none; stroke: #222; }
.t { fill: none; stroke: #666; }
.w { fill: #fff; stroke: #444; }
.g { fill: none; stroke: #a5a396; }
.c { fill: #8ff0ee; stroke: #466; }
.br { fill: none; stroke: #96562c; stroke-width: 1.5; }
.pu { fill: none; stroke: #a044a8; }
.nv { fill: none; stroke: #118; stroke-width: 2; }
.dots { fill: none; stroke: #629; stroke-width: 2; stroke-dasharray: 2 2; }
.ln { fill: none; stroke: #6b5d50; }
circle, ellipse, .br, .pu, .soft, .model { shape-rendering: auto; }

/* main window */
.app {
  position: relative;
  z-index: 1;
  flex: 1;
  min-width: 0;
  display: flex;
  flex-direction: column;
  background: var(--face);
  border: solid var(--blue);
  border-width: 0 4px 4px;
  border-radius: 0 8px 0 0;
}

.titlebar {
  position: relative;
  display: flex;
  align-items: center;
  height: 30px;
  margin: 0 -4px;
  padding: 2px 5px 0 6px;
  border-radius: 0 8px 0 0;
  background: linear-gradient(#0048d0, #3a8cff 8%, #0458e4 20%, #0353e2 60%, #0664fb 85%, #0040c8);
  color: #fff;
}

.title-icon {
  width: 15px;
  height: 15px;
}

.title {
  flex: 1;
  display: flex;
  align-items: baseline;
  gap: 10px;
  padding-left: 4px;
  font: bold 13px/20px var(--mono);
  text-shadow: 1px 1px #0a2f8c;
}

.zh {
  font: bold 14px/20px var(--zh);
}

.win-buttons {
  display: flex;
  gap: 2px;
}

.win-btn {
  width: 21px;
  height: 21px;
  border: 1px solid #fff;
  border-radius: 3px;
  background: linear-gradient(135deg, #6f9bf2, #2a5fdc 50%, #2457d0);
}

.win-close {
  background: linear-gradient(135deg, #f0a080, #e05028 50%, #c83c14);
}

.badge {
  position: absolute;
  border: 2px solid #334;
}

.badge-down {
  left: 69px;
  top: 1px;
  width: 37px;
  height: 33px;
  z-index: 2;
  border-color: #8288a0;
  background: rgba(28, 50, 120, .75);
}

.menubar {
  display: flex;
  gap: 12px;
  height: 24px;
  padding: 2px 6px;
  border-bottom: 1px solid #d0cdbb;
  background: linear-gradient(90deg, #fafaf8, var(--face) 90%);
}

.menubar a {
  white-space: nowrap;
}

.toolbars {
  background: linear-gradient(90deg, #f4f3ec, var(--face) 60%);
}

.toolbar {
  display: flex;
  height: 28px;
}

.tool {
  display: flex;
  align-items: center;
  justify-content: center;
  width: 28px;
  height: 28px;
  flex: none;
  border: 1px solid transparent;
}

.tool svg {
  width: 20px;
  height: 20px;
  flex: none;
}

.tool.on {
  border-color: #98b0c4;
  border-radius: 3px;
  background: #fff;
}

.tool.framed {
  border-color: #c8c8c0;
  border-radius: 3px;
  background: #f4f3ee;
}

.drop {
  display: flex;
  align-items: center;
  justify-content: center;
  width: 13px;
}

.drop .caret {
  border-width: 3px 3px 0;
}

.grip {
  width: 11px;
  margin: 3px 0;
  background: repeating-linear-gradient(#999 0 2px, transparent 2px 4px) 5px 0 / 2px 100% no-repeat;
}

.grip.wide {
  width: 14px;
}

.caret {
  border: solid transparent;
  border-width: 4px 4px 0;
  border-top-color: #111;
}

/* work area */
.workspace {
  flex: 1;
  min-height: 0;
  display: flex;
}

.navigator {
  display: flex;
  flex-direction: column;
  width: 249px;
  padding: 0 0 3px 1px;
}

.tabs {
  display: flex;
  height: 30px;
  align-items: flex-end;
}

.tab {
  display: flex;
  align-items: center;
  justify-content: center;
  width: 31px;
  height: 27px;
  border: 1px solid #91a7b4;
  border-bottom: 0;
  border-radius: 3px 3px 0 0;
  background: linear-gradient(#fff, #ecebe6);
}

.tab svg {
  width: 20px;
  height: 20px;
}

.tab.active {
  width: 35px;
  height: 30px;
  border-top: 2px solid #e8962c;
  background: #fff;
}

.nav-panel {
  flex: 1;
  display: flex;
  flex-direction: column;
  border: 1px solid #8ba3b5;
  background: #fff;
  box-shadow: inset -1px -1px #c3d0da;
}

.nav-actions {
  display: flex;
  gap: 2px;
  padding: 1px;
  background: var(--face);
}

.nav-btn {
  display: flex;
  align-items: center;
  justify-content: flex-end;
  width: 78px;
  height: 19px;
  padding-right: 6px;
  border: 1px solid #1c4a70;
  border-radius: 3px;
  background: linear-gradient(#fff, #f2f1ea);
}

.nav-btn .caret {
  margin-left: 5px;
}

.tree-head {
  height: 16px;
  margin-right: 1px;
  border: 1px solid var(--field);
  border-bottom-color: #c5c2b2;
  background: var(--face);
}

.tree {
  padding: 2px 4px;
}

.tree li {
  position: relative;
  display: flex;
  align-items: center;
  height: 18px;
  padding-left: 18px;
  background:
    repeating-linear-gradient(90deg, #aaa 0 1px, transparent 1px 2px) 7px 9px / 12px 1px no-repeat,
    repeating-linear-gradient(#aaa 0 1px, transparent 1px 2px) 7px 0 / 1px 100% no-repeat;
}

.tree svg {
  width: 16px;
  height: 16px;
  margin-right: 3px;
}

.tree .root {
  padding-left: 0;
  margin-left: -2px;
  background: none;
}

.tree .last {
  background-size: 12px 1px, 1px 9px;
}

.tree .last svg {
  width: 12px;
  height: 12px;
  margin: 0 5px 0 2px;
}

.closed::before {
  content: "+";
  position: absolute;
  left: 3px;
  width: 9px;
  height: 9px;
  border: 1px solid #7c8ea0;
  background: #fff;
  font: 10px/7px var(--mono);
  text-align: center;
}

.selected {
  height: 14px;
  line-height: 13px;
  outline: 1px dotted #222;
  outline-offset: -1px;
  background: #316ac5;
  color: #fff;
}

.splitter {
  display: flex;
  width: 17px;
}

.collapse {
  width: 11px;
  padding: 238px 0 0 4px;
  display: flex;
  flex-direction: column;
  gap: 104px;
}

.ridge {
  width: 6px;
  height: 107px;
  padding-top: 44px;
  background: repeating-conic-gradient(#aaa 0 25%, #eee 0 50%) 0 0 / 2px 2px;
}

.ridge svg {
  width: 6px;
  height: 18px;
  fill: none;
  stroke: #1a2bb0;
  stroke-width: 2;
}

.sash {
  width: 6px;
  padding-top: 345px;
  border: solid #8a9ac8;
  border-width: 0 1px;
  background: #dfe4f4;
}

.sash i {
  display: block;
  width: 2px;
  height: 103px;
  background: repeating-linear-gradient(#1a2bb0 0 1px, transparent 1px 4px);
}

.viewport {
  flex: 1;
  min-width: 0;
  background: linear-gradient(#a3a697, #acc5b8);
}

.model {
  width: 100%;
  height: 100%;
}

.dim {
  fill: #ff2;
}

.dim path {
  fill: none;
  stroke: #ff2;
}

.dim .head {
  fill: #ff2;
}

.dim-num {
  font: 12px var(--mono);
}

.dim-text {
  font: bold 8px var(--zh);
}

.features {
  display: flex;
  gap: 13px;
  width: 68px;
}

.feature-col {
  width: 28px;
  padding-top: 1px;
}

.rule {
  display: block;
  width: 38px;
  height: 13px;
  background: repeating-linear-gradient(90deg, #999 0 2px, transparent 2px 4px) 2px 5px / 100% 2px no-repeat;
}

.feature-col > .rule:first-child {
  height: 11px;
  background-position: 2px 3px;
}

.feature-col:last-child .rule {
  width: 26px;
}

.with-drop {
  width: 40px;
  justify-content: flex-start;
  padding-left: 3px;
  gap: 6px;
}

.with-drop .caret {
  border-width: 3px 3px 0;
}

/* message log */
.messages {
  display: flex;
  height: 97px;
  padding: 2px 0 1px;
  border-bottom: 1px solid var(--line);
  background: #ebeae2;
}

.log {
  flex: 1;
  padding: 10px 0 0 3px;
  font-family: var(--zh);
}

.log li {
  display: flex;
  align-items: center;
  height: 16px;
}

.dot {
  width: 5px;
  height: 5px;
  margin: 0 5px 0 3px;
  border-radius: 50%;
  background: #11c;
}

.go {
  width: 11px;
  height: 12px;
  margin-right: 2px;
  fill: #2e7;
  stroke: #142;
}

.scroll {
  display: flex;
  flex-direction: column;
  width: 16px;
  background: #f8f8f4;
}

.scroll-btn,
.select-btn {
  display: flex;
  align-items: center;
  justify-content: center;
  width: 15px;
  height: 16px;
  border: 1px solid #b5c8f0;
  border-radius: 2px;
  background: #c8d8fc;
}

.scroll-btn svg,
.select-btn svg {
  width: 12px;
  height: 12px;
}

.scroll-thumb {
  width: 15px;
  height: 12px;
  margin-top: auto;
  border: 1px solid #b5c8f0;
  border-radius: 2px;
  background: repeating-linear-gradient(#c8d8fc 0 1px, #e8f0ff 1px 2px);
}

/* status line */
.statusbar {
  display: flex;
  height: 22px;
  border-top: 1px solid #fff;
}

.status-text {
  flex: 1;
  padding-top: 2px;
  border-right: 1px solid var(--line);
}

.status-sel {
  width: 92px;
  margin-left: 2px;
  padding-left: 2px;
  background: #d6d0c8;
}

.filter {
  position: relative;
  width: 179px;
  margin: 1px 2px 1px 3px;
}

.filter select {
  width: 100%;
  height: 18px;
  padding-left: 3px;
  appearance: none;
  border: 1px solid var(--field);
  border-radius: 0;
  background: #fff;
  font: 12px/16px var(--zh);
}

.select-btn {
  position: absolute;
  top: 2px;
  right: 2px;
  height: 14px;
  pointer-events: none;
}

.light {
  width: 57px;
  padding: 1px 0 0 7px;
  border-left: 1px solid var(--line);
}

.light svg {
  width: 10px;
  height: 20px;
}

/* browser behind */
.browser {
  position: relative;
  display: flex;
  flex-direction: column;
  width: 132px;
  background: var(--face);
}

.b-title {
  display: flex;
  align-items: center;
  gap: 3px;
  height: 26px;
  padding-right: 2px;
  background: linear-gradient(#8fa8e4, #7a96df 40%, #7f9be0);
}

.b-title .win-btn {
  opacity: .8;
}

.b-name {
  flex: 1;
  overflow: hidden;
  white-space: nowrap;
  color: #dde6fa;
  font: bold 13px/20px var(--mono);
}

.badge-bird {
  right: 16px;
  top: 16px;
  width: 36px;
  height: 36px;
  background: #3580a8;
}

.b-bar {
  border-bottom: 2px solid #fff;
}

.b-menu {
  height: 22px;
}

.b-tools {
  height: 40px;
}

.b-address {
  height: 32px;
  border-bottom: 1px solid #cfccb9;
}

.b-tabs {
  height: 26px;
  border-bottom: 2px solid #77736a;
  background: #fbfbf9;
}

.b-body {
  flex: 1;
  display: flex;
  background: #f7f7f7;
}

.b-page {
  flex: 1;
  display: flex;
  flex-direction: column;
  margin-right: 26px;
}

.post {
  height: 458px;
  padding-top: 280px;
  border: solid #748292;
  border-width: 0 2px 2px 0;
  background: #fff;
}

.reply {
  display: flex;
  gap: 13px;
  height: 26px;
  border-bottom: 1px solid #9fb0c0;
  font: 14px/20px var(--zh);
}

.reply span {
  margin-left: -4px;
}

.top {
  width: 22px;
  color: #1d5088;
  font: 9px/9px "Liberation Sans", sans-serif;
}

.top svg {
  width: 16px;
  height: 7px;
}

.ad {
  width: 20px;
  margin: 30px 0 0 29px;
  overflow: hidden;
  white-space: nowrap;
  font: 16px/20px "Noto Sans", var(--zh);
}

.ad a {
  color: #11d;
  font: bold 19px/24px var(--zh);
  text-decoration: underline;
}

.ad .url {
  color: #158a15;
  font-size: 13px;
}

.post.next {
  flex: 1;
  margin-top: 6px;
  padding-top: 0;
  border-width: 2px 2px 0 0;
}

.floor {
  height: 38px;
  padding: 4px 0 0 35px;
  border-bottom: 2px solid #9fb0c0;
}

.floor span {
  display: block;
  width: 30px;
  height: 27px;
  border: 1px solid #8fa2b5;
  font: bold 14px/25px "DejaVu Sans", sans-serif;
  text-align: center;
}

.b-scroll {
  display: flex;
  flex-direction: column;
  width: 24px;
  padding-right: 2px;
}

.b-arrow {
  display: flex;
  align-items: center;
  justify-content: center;
  width: 22px;
  height: 22px;
  border: solid #999;
  border-width: 0 2px 2px 0;
  background: #f9f9f9;
}

.b-arrow svg {
  width: 12px;
  height: 12px;
}

.b-thumb {
  height: 82px;
  margin: 156px 0 auto;
  border: solid #999;
  border-width: 1px 2px 2px 0;
  background: #f7f7f7;
}

.b-hscroll {
  display: flex;
  justify-content: space-between;
  height: 22px;
  padding-right: 24px;
  background: #fafafa;
}

.b-hscroll span {
  width: 41px;
  border: solid #999;
  border-width: 0 1px 1px 0;
}

.b-status {
  display: flex;
  height: 26px;
  padding: 6px 0 0 12px;
  border-top: 2px solid #b8b5a5;
  border-bottom: 3px solid #2a6ad8;
  white-space: nowrap;
}

.b-status span {
  flex: 1;
  padding-left: 8px;
  border-left: 1px solid var(--line);
  font: 12px/14px "Liberation Mono", var(--zh);
}

.b-status span:last-child {
  flex: none;
  width: 22px;
}

.watermark {
  position: absolute;
  z-index: 2;
  right: 7px;
  bottom: 5px;
  color: #e8343c;
  font: bold 16px/18px "Liberation Sans", sans-serif;
}
```
